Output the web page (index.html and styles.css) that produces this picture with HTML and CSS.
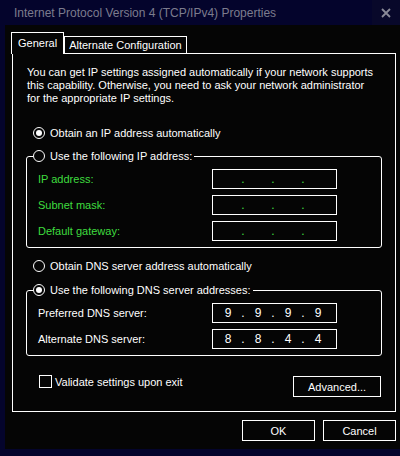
FILE: index.html
```html
<!DOCTYPE html>
<html lang="en">
<head>
    <meta charset="UTF-8">
    <title>Internet Protocol Version 4 (TCP/IPv4) Properties</title>
    <link rel="stylesheet" href="styles.css">
</head>
<body>
    <!-- Loga virsraksts -->
    <div class="titlebar">
        <span class="title">Internet Protocol Version 4 (TCP/IPv4) Properties</span>
        <span class="close">
            <svg width="10" height="10" viewBox="0 0 10 10"><path d="M1 1L9 9M9 1L1 9" stroke="#8a8a98" stroke-width="1.8"/></svg>
        </span>
    </div>

    <div class="window">
        <div class="tabs">
            <div class="tab active">General</div>
            <div class="tab">Alternate Configuration</div>
        </div>

        <div class="panel">
            <p class="intro">You can get IP settings assigned automatically if your network supports this capability. Otherwise, you need to ask your network administrator for the appropriate IP settings.</p>

            <div class="option first"><span class="radio checked"></span>Obtain an IP address automatically</div>

            <fieldset class="group">
                <legend><span class="radio"></span>Use the following IP address:</legend>
                <div class="field disabled">
                    <span class="label">IP address:</span>
                    <div class="ip"><span class="oct"></span><span class="dot">.</span><span class="oct"></span><span class="dot">.</span><span class="oct"></span><span class="dot">.</span><span class="oct"></span></div>
                </div>
                <div class="field disabled">
                    <span class="label">Subnet mask:</span>
                    <div class="ip"><span class="oct"></span><span class="dot">.</span><span class="oct"></span><span class="dot">.</span><span class="oct"></span><span class="dot">.</span><span class="oct"></span></div>
                </div>
                <div class="field disabled">
                    <span class="label">Default gateway:</span>
                    <div class="ip"><span class="oct"></span><span class="dot">.</span><span class="oct"></span><span class="dot">.</span><span class="oct"></span><span class="dot">.</span><span class="oct"></span></div>
                </div>
            </fieldset>

            <div class="option dns"><span class="radio"></span>Obtain DNS server address automatically</div>

            <fieldset class="group dns-group">
                <legend><span class="radio checked"></span>Use the following DNS server addresses:</legend>
                <div class="field">
                    <span class="label">Preferred DNS server:</span>
                    <div class="ip"><span class="oct">9</span><span class="dot">.</span><span class="oct">9</span><span class="dot">.</span><span class="oct">9</span><span class="dot">.</span><span class="oct">9</span></div>
                </div>
                <div class="field">
                    <span class="label">Alternate DNS server:</span>
                    <div class="ip"><span class="oct">8</span><span class="dot">.</span><span class="oct">8</span><span class="dot">.</span><span class="oct">4</span><span class="dot">.</span><span class="oct">4</span></div>
                </div>
            </fieldset>

            <div class="bottom-row">
                <div class="check"><span class="box"></span>Validate settings upon exit</div>
                <button class="btn advanced">Advanced...</button>
            </div>
        </div>

        <div class="actions">
            <button class="btn">OK</button>
            <button class="btn">Cancel</button>
        </div>
    </div>
</body>
</html>
```

FILE: styles.css
```css
/* Pamata stils */
body {
    margin: 0;
    width: 400px;
    height: 456px;
    background-color: #04042c;
    font-family: "Liberation Sans", Arial, sans-serif;
    font-size: 11px;
    color: #fff;
    overflow: hidden;
}
.titlebar {
    height: 25px;
    display: flex;
    align-items: center;
}
.title {
    flex: 1;
    padding-left: 14px;
    font-size: 12px;
    color: #7c7c8e;
}
.close {
    width: 28px;
    height: 25px;
    background-color: #08082a;
    display: flex;
    align-items: center;
    justify-content: center;
}
.window {
    margin-left: 5px;
    height: 424px;
    background-color: #050505;
    padding: 8px 4px 0 6px;
    box-sizing: border-box;
}
.tabs {
    display: flex;
    align-items: flex-end;
    height: 20px;
    position: relative;
    z-index: 1;
}
.tab {
    border: 1px solid #fff;
    border-bottom: none;
    height: 16px;
    line-height: 16px;
    padding: 0 4px;
    background-color: #050505;
}
.tab.active {
    height: 21px;
    line-height: 20px;
    padding: 0 6px;
    margin-bottom: -1px;
    border-right: 1px solid #fff;
}
.panel {
    border: 1px solid #fff;
    height: 359px;
    box-sizing: border-box;
    margin-left: 1px;
    padding: 12px 13px 0 13px;
}
.intro {
    margin: 0;
    width: 352px;
    line-height: 13px;
    padding-left: 1px;
}
.option {
    display: flex;
    align-items: center;
    height: 16px;
    padding-left: 7px;
}
.option.first {
    margin-top: 20px;
}
.option.dns {
    margin-top: 10px;
}
.radio {
    width: 12px;
    height: 12px;
    border: 1px solid #fff;
    border-radius: 50%;
    box-sizing: border-box;
    margin-right: 5px;
    display: inline-flex;
    align-items: center;
    justify-content: center;
    flex-shrink: 0;
}
.radio.checked::after {
    content: "";
    width: 6px;
    height: 6px;
    border-radius: 50%;
    background-color: #fff;
}
.group {
    border: 1px solid #fff;
    border-radius: 3px;
    margin: 7px 0 0 0;
    padding: 5px 0 6px 11px;
    width: 356px;
    box-sizing: border-box;
}
.group legend {
    display: flex;
    align-items: center;
    padding: 0 2px 0 0;
    margin-left: -5px;
    height: 16px;
}
.dns-group {
    margin-top: 8px;
}
.field {
    display: grid;
    grid-template-columns: 174px 125px;
    align-items: center;
    margin-top: 6px;
}
.field:first-of-type {
    margin-top: 0;
}
.field.disabled .label,
.field.disabled .dot {
    color: #3fdc3f;
}
.ip {
    height: 20px;
    border: 1px solid #fff;
    box-sizing: border-box;
    display: flex;
    align-items: center;
    padding-left: 7px;
    font-size: 12px;
}
.oct {
    width: 16px;
    text-align: center;
}
.dot {
    width: 14px;
    text-align: center;
}
.bottom-row {
    display: flex;
    justify-content: space-between;
    align-items: flex-start;
    margin-top: 19px;
    width: 355px;
}
.check {
    display: flex;
    align-items: center;
    padding-left: 13px;
    height: 13px;
}
.box {
    width: 13px;
    height: 13px;
    border: 1px solid #fff;
    box-sizing: border-box;
    margin-right: 3px;
}
.btn {
    background-color: #050505;
    color: #fff;
    border: 1px solid #fff;
    font-family: "Liberation Sans", Arial, sans-serif;
    font-size: 11px;
    height: 21px;
    width: 73px;
    padding: 0;
}
.btn.advanced {
    width: 88px;
    margin-top: 1px;
}
.actions {
    display: flex;
    justify-content: flex-end;
    gap: 8px;
    margin-top: 8px;
}
```
